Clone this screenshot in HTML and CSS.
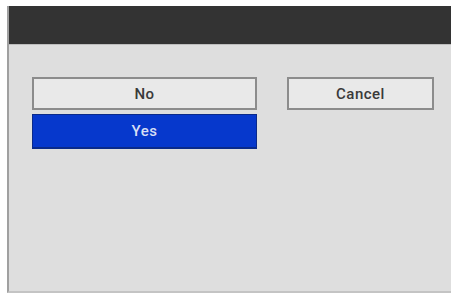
FILE: index.html
```html
<!DOCTYPE html>
<html lang="en">
<head>
  <meta charset="UTF-8" />
  <meta name="viewport" content="width=device-width, initial-scale=1.0" />
  <title>Confirm</title>
  <link rel="stylesheet" href="styles.css">
</head>
<body>
  <div class="dialog">
    <div class="dialog-header"></div>
    <div class="dialog-body">
      <div class="choices">
        <button class="btn">No</button>
        <button class="btn btn-selected">Yes</button>
      </div>
      <div class="side">
        <button class="btn btn-cancel">Cancel</button>
      </div>
    </div>
  </div>
</body>
</html>
```

FILE: styles.css
```css
* {
  box-sizing: border-box;
  margin: 0;
  padding: 0;
}
body {
  background: #fff;
  font-family: "Liberation Sans", Arial, sans-serif;
}
.dialog {
  margin: 6px 0 0 7px;
  width: 444px;
  height: 287px;
  background: #dedede;
  border-left: 2px solid #a0a0a0;
  border-bottom: 2px solid #c4c4c4;
  display: flex;
  flex-direction: column;
}
.dialog-header {
  height: 39px;
  background: #333;
  border-bottom: 1px solid #bdbdbd;
}
.dialog-body {
  display: flex;
  gap: 30px;
  padding: 32px 0 0 23px;
}
.choices {
  display: flex;
  flex-direction: column;
  gap: 4px;
  width: 225px;
}
.side {
  width: 147px;
}
.btn {
  display: block;
  width: 100%;
  height: 33px;
  background: #e9e9e9;
  border: 2px solid #8c8c8c;
  color: #3a3a3a;
  font-family: Roboto, "Liberation Sans", sans-serif;
  font-size: 15px;
  font-weight: 500;
  letter-spacing: 0.5px;
  line-height: 31px;
  text-align: center;
}
.btn-selected {
  height: 35px;
  background: #0638cc;
  border: 1px solid #0a2a8a;
  border-bottom-width: 2px;
  color: #d6def4;
}
.btn-cancel {
  width: 147px;
}
```
